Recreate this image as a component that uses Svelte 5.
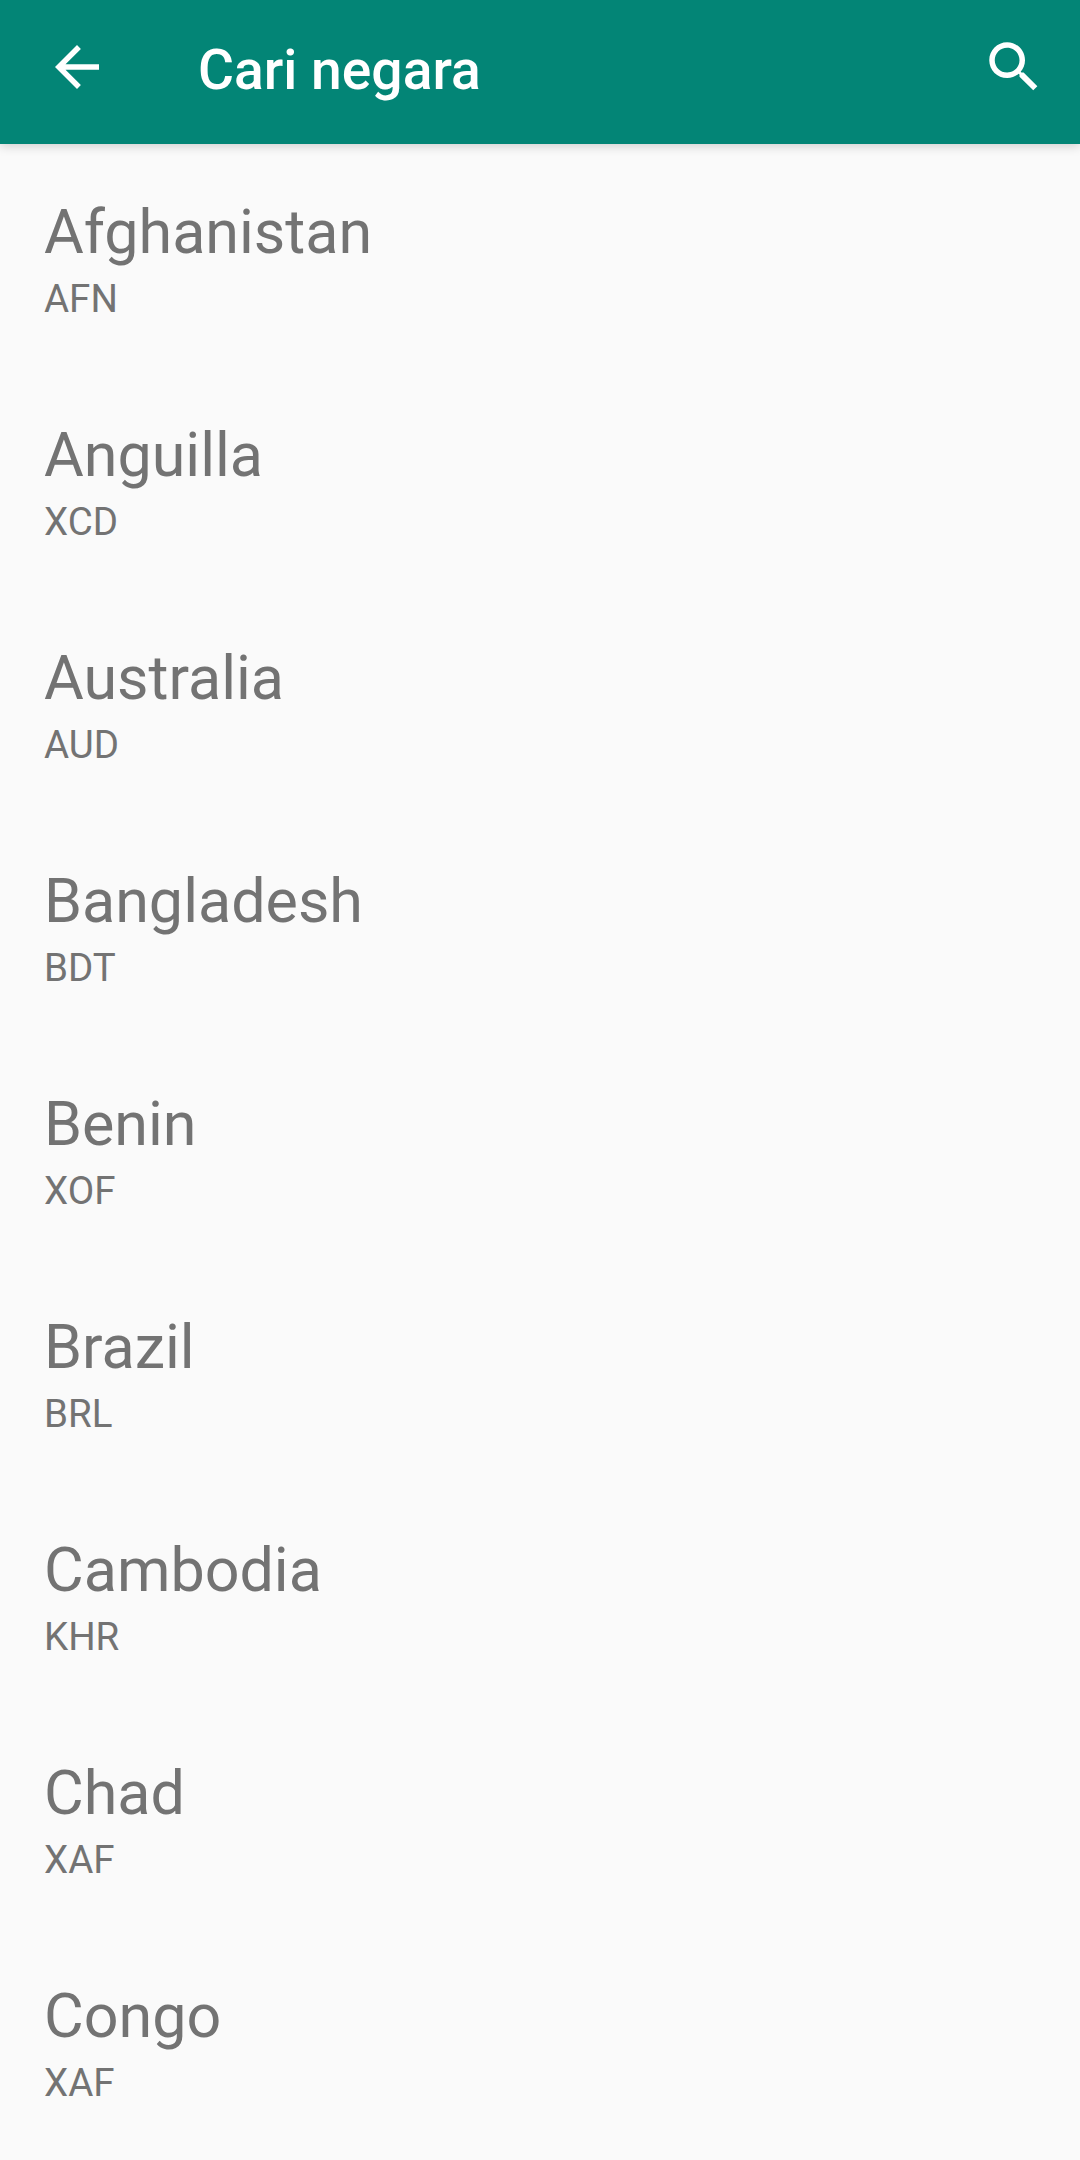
<script>
  const countries = [
    { name: 'Afghanistan', currency: 'AFN' },
    { name: 'Anguilla', currency: 'XCD' },
    { name: 'Australia', currency: 'AUD' },
    { name: 'Bangladesh', currency: 'BDT' },
    { name: 'Benin', currency: 'XOF' },
    { name: 'Brazil', currency: 'BRL' },
    { name: 'Cambodia', currency: 'KHR' },
    { name: 'Chad', currency: 'XAF' },
    { name: 'Congo', currency: 'XAF' }
  ];
</script>

<header>
  <button aria-label="Kembali">
    <svg viewBox="0 0 24 24"><path d="M20 11H7.83l5.59-5.59L12 4l-8 8 8 8 1.41-1.41L7.83 13H20v-2z" /></svg>
  </button>
  <h1>Cari negara</h1>
  <button aria-label="Cari">
    <svg viewBox="0 0 24 24"><path d="M15.5 14h-.79l-.28-.27C15.41 12.59 16 11.11 16 9.5 16 5.91 13.09 3 9.5 3S3 5.91 3 9.5 5.91 16 9.5 16c1.61 0 3.09-.59 4.23-1.57l.27.28v.79l5 4.99L20.49 19l-4.99-5zm-6 0C7.01 14 5 11.99 5 9.5S7.01 5 9.5 5 14 7.01 14 9.5 11.99 14 9.5 14z" /></svg>
  </button>
</header>

<ul>
  {#each countries as country}
    <li>
      <span class="name">{country.name}</span>
      <span class="currency">{country.currency}</span>
    </li>
  {/each}
</ul>

<style>
  :global(body) {
    background: #fafafa;
    font-family: Roboto, sans-serif;
  }
  header {
    display: flex;
    align-items: center;
    box-sizing: border-box;
    height: 144px;
    padding: 0 33px 10px 44px;
    background: #038576;
    color: #fff;
    box-shadow: 0 2px 10px rgba(0, 0, 0, 0.18);
  }
  h1 {
    flex: 1;
    margin: 6px 0 0 88px;
    font-size: 55.2px;
    font-weight: 500;
    line-height: 64px;
  }
  button {
    padding: 0;
    border: 0;
    background: none;
  }
  svg {
    display: block;
    width: 66px;
    height: 66px;
    fill: #fff;
  }
  ul {
    margin: 0;
    padding: 0;
    list-style: none;
  }
  li {
    display: flex;
    flex-direction: column;
    box-sizing: border-box;
    height: 223px;
    padding: 52px 44px 0;
    color: #737373;
  }
  .name {
    font-size: 61px;
    line-height: 72px;
  }
  .currency {
    font-size: 38.5px;
    line-height: 46px;
    margin-top: 8px;
  }
</style>
